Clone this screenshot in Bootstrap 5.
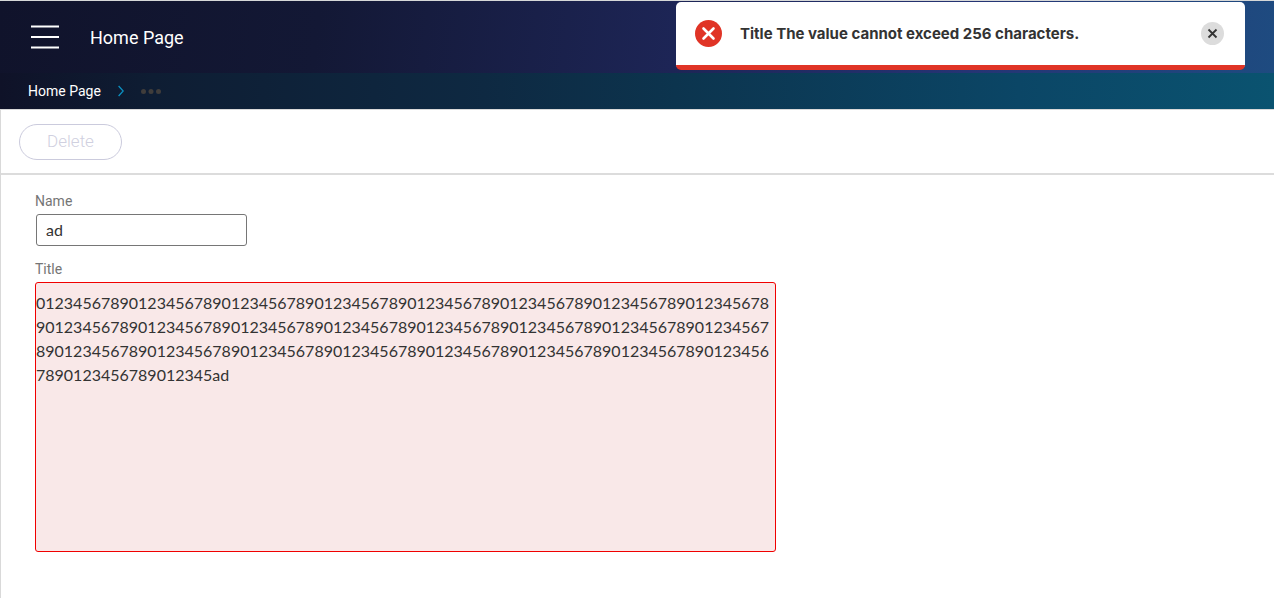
<!DOCTYPE html>
<html lang="en">
<head>
<meta charset="utf-8">
<meta name="viewport" content="width=device-width, initial-scale=1">
<title>Home Page</title>
<link href="https://cdn.jsdelivr.net/npm/bootstrap@5.3.0/dist/css/bootstrap.min.css" rel="stylesheet">
<style>
  body { font-family: Roboto, "Liberation Sans", sans-serif; color: #333; }
  .shell { border-top: 1px solid #d6d8d8; }
  .topbar { height: 72px; padding-left: 31px; background: linear-gradient(97deg, #10132b 0%, #131835 25%, #1d2556 53%, #253474 76%, #1e4b80 100%); }
  .menu-btn { width: 28px; height: 24px; }
  .app-title { font-size: 18px; line-height: 26px; padding-top: 2px; margin-left: 31px; }
  .crumbs { height: 36px; padding-left: 28px; gap: 17px; font-size: 14px; background: linear-gradient(90deg, #0f1228 0%, #0e1d33 12%, #0e2942 38%, #0c344e 53%, #0b4666 80%, #0a5370 100%); }
  .page-area { border-left: 1px solid #d9d9d9; border-top: 1px solid #d9d9d9; }
  .toolbar { padding: 14px 18px 13px; border-bottom: 2px solid #dcdcdc; }
  .btn-delete { --bs-btn-disabled-color: #d0d0e0; --bs-btn-disabled-border-color: #cbcbdd; --bs-btn-disabled-opacity: 1; width: 103px; height: 36px; font-size: 17px; font-weight: 300; }
  .record-form { padding: 16px 34px 46px; }
  .field-label { font-size: 14px; line-height: 20px; margin-bottom: 3px; color: #757575; }
  .name-input { width: 211px; height: 32px; padding: 0 9px 2px; margin-left: 1px; margin-bottom: 13px; border-color: #767676; border-radius: 3px; font: 16px/24px Lato, sans-serif; color: #333; }
  textarea.title-input.is-invalid { width: 741px; max-width: 100%; height: 270px; padding: 8px 0 0; border: 1px solid #f00000; border-radius: 3px; background: #f9e8e8; font: 16px/24px Lato, sans-serif; color: #333; resize: none; overflow: hidden; word-break: break-all; }
  .alert-toast { top: 1px; right: 29px; width: 569px; height: 68px; padding: 0 21px 0 19px; background: #fff; border: 0 solid #e03426; border-bottom-width: 5px; border-radius: 5px; font: 700 15px/24px Inter, sans-serif; }
  .alert-text { margin-left: 18px; }
  .dismiss-btn { width: 23px; height: 23px; }
</style>
</head>
<body class="bg-white">
<div class="shell position-relative">
  <header>
    <nav class="topbar d-flex align-items-center" aria-label="Main">
      <button type="button" class="menu-btn btn p-0 border-0 d-flex" aria-label="Menu">
        <svg width="28" height="24" viewBox="0 0 28 24" stroke="#fff" stroke-width="2"><path d="M0 1.5h28M0 12h28M0 22.5h28"/></svg>
      </button>
      <span class="app-title text-white">Home Page</span>
    </nav>
    <nav class="crumbs d-flex align-items-center" aria-label="Breadcrumb">
      <a href="#" class="text-white text-decoration-none">Home Page</a>
      <svg width="6" height="12" viewBox="0 0 6 12" fill="none" stroke="#0b8fc0" stroke-width="1.3"><path d="M.6 1l4.6 5-4.6 5"/></svg>
      <svg width="20" height="6" viewBox="0 0 20 6" fill="#403d3b"><circle cx="2.5" cy="3.5" r="2.5"/><circle cx="10" cy="3.5" r="2.5"/><circle cx="17.5" cy="3.5" r="2.5"/></svg>
    </nav>
  </header>
  <div class="alert-toast position-absolute mw-100 d-flex align-items-center" role="alert">
    <svg class="flex-shrink-0" width="27" height="27" viewBox="0 0 27 27"><circle cx="13.5" cy="13.5" r="13.5" fill="#e03426"/><path d="M8.5 8.5l10 10M18.5 8.5l-10 10" stroke="#fff" stroke-width="2.6" stroke-linecap="round"/></svg>
    <span class="alert-text">Title The value cannot exceed 256 characters.</span>
    <button type="button" class="dismiss-btn btn p-0 border-0 d-flex ms-auto flex-shrink-0" aria-label="Dismiss">
      <svg width="23" height="23" viewBox="0 0 23 23"><circle cx="11.5" cy="11.5" r="11.5" fill="#dcdcdc"/><path d="M7.5 7.5l8 8M15.5 7.5l-8 8" stroke="#333" stroke-width="1.8"/></svg>
    </button>
  </div>
  <main class="page-area">
    <div class="toolbar">
      <button type="button" class="btn btn-delete rounded-pill p-0" disabled>Delete</button>
    </div>
    <form class="record-form">
      <label class="field-label d-block" for="name">Name</label>
      <input class="name-input form-control" id="name" type="text" value="ad">
      <label class="field-label d-block" for="title">Title</label>
      <textarea class="title-input form-control is-invalid" id="title" spellcheck="false">0123456789012345678901234567890123456789012345678901234567890123456789012345678901234567890123456789012345678901234567890123456789012345678901234567890123456789012345678901234567890123456789012345678901234567890123456789012345678901234567890123456789012345ad</textarea>
    </form>
  </main>
</div>
<script src="https://cdn.jsdelivr.net/npm/bootstrap@5.3.0/dist/js/bootstrap.bundle.min.js"></script>
</body>
</html>
